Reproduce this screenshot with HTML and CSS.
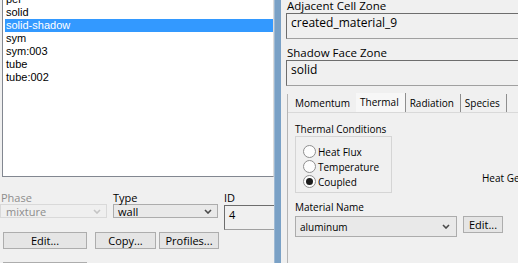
FILE: index.html
```html
<!DOCTYPE html>
<html lang="en">
<head>
    <meta charset="UTF-8">
    <title>boundary conditions</title>
    <link rel="stylesheet" href="styles.css">
</head>
<body>

<section id="window">

<section class="left-pane">
    <div class="zone-list">
        <ul class="zone-items">
            <li>per</li>
            <li>solid</li>
            <li class="selected">solid-shadow</li>
            <li>sym</li>
            <li>sym:003</li>
            <li>tube</li>
            <li>tube:002</li>
        </ul>
    </div>

    <div class="zone-fields">
        <div class="field phase-field">
            <label class="disabled-text">Phase</label>
            <div class="combo combo-small disabled">
                <span>mixture</span>
                <svg class="arrow" width="8" height="5" viewBox="0 0 8 5"><path d="M1 1 L4 4 L7 1" /></svg>
            </div>
        </div>
        <div class="field type-field">
            <label>Type</label>
            <div class="combo combo-small">
                <span>wall</span>
                <svg class="arrow" width="8" height="5" viewBox="0 0 8 5"><path d="M1 1 L4 4 L7 1" /></svg>
            </div>
        </div>
        <div class="field id-field">
            <label>ID</label>
            <div class="text-input id-input">4</div>
        </div>
    </div>

    <div class="zone-buttons">
        <button class="btn btn-edit">Edit...</button>
        <button class="btn btn-copy">Copy...</button>
        <button class="btn btn-profiles">Profiles...</button>
    </div>
    <div class="zone-buttons">
        <button class="btn btn-edit"></button>
    </div>
</section>

<div class="splitter"></div>

<section class="right-pane">
    <label class="top-label">Adjacent Cell Zone</label>
    <div class="text-input wide-input">created_material_9</div>
    <label class="top-label">Shadow Face Zone</label>
    <div class="text-input wide-input">solid</div>

    <div class="tabs">
        <div class="tab-strip">
            <span class="tab">Momentum</span>
            <span class="tab active">Thermal</span>
            <span class="tab">Radiation</span>
            <span class="tab">Species</span>
        </div>
        <div class="tab-body">
            <label class="group-label">Thermal Conditions</label>
            <div class="group-row">
                <div class="group-box">
                    <div class="radio"><span class="dot"></span>Heat Flux</div>
                    <div class="radio"><span class="dot"></span>Temperature</div>
                    <div class="radio checked"><span class="dot"></span>Coupled</div>
                </div>
                <span class="heat-label">Heat Generation Rate</span>
            </div>
            <label class="group-label material-label">Material Name</label>
            <div class="material-row">
                <div class="combo material-combo">
                    <span>aluminum</span>
                    <svg class="arrow" width="8" height="5" viewBox="0 0 8 5"><path d="M1 1 L4 4 L7 1" /></svg>
                </div>
                <button class="btn btn-small">Edit...</button>
            </div>
        </div>
    </div>
</section>

</section>

</body>
</html>
```

FILE: styles.css
```css
:root{
    --panel-bg: #f0f0f0;
    --text-color: #000;
    --gray-text: #8d8d8d;
}

*{
padding: 0;
margin: 0;
box-sizing: border-box;
font-family: 'Open Sans', 'Liberation Sans', sans-serif;
font-size: 11px;
}

body{
    background: var(--panel-bg);
    width: 518px;
    height: 263px;
    overflow: hidden;
}

#window{
    display: flex;
    height: 263px;
}

/* left side */
.left-pane{
    width: 274px;
    flex-shrink: 0;
    overflow: hidden;
}

.zone-list{
    margin-left: 2px;
    height: 177px;
    background: #fff;
    border: 1px solid #828790;
    border-top: none;
    border-right-color: #dcdcdc;
    overflow: hidden;
}

.zone-items{
    list-style: none;
    margin-top: -7px;
    padding-left: 2px;
}

.zone-items li{
    height: 13px;
    line-height: 13px;
    padding-left: 1px;
    font-family: 'Liberation Sans', Arial, sans-serif;
    font-size: 11px;
}

.zone-items li.selected{
    background: #3399ff;
    color: #fff;
}

.zone-fields{
    display: flex;
    margin-top: 14px;
}

.field{
    flex-shrink: 0;
}

.field label{
    display: block;
    height: 13px;
    line-height: 13px;
}

.disabled-text{
    color: var(--gray-text);
}

.phase-field{
    width: 107px;
}

.phase-field label{
    padding-left: 1px;
}

.phase-field .combo{
    padding-left: 5px;
}

.type-field{
    width: 105px;
    margin-left: 6px;
}

.id-field{
    width: 90px;
    margin-left: 6px;
}

.combo{
    display: flex;
    justify-content: space-between;
    align-items: center;
    border: 1px solid #acacac;
    background: #e9e9e9;
    padding: 0 5px 0 4px;
}

.combo-small{
    height: 14px;
}

.combo.disabled{
    border-color: #d9d9d9;
    background: #efefef;
    color: var(--gray-text);
}

.arrow path{
    fill: none;
    stroke: #4a4a4a;
    stroke-width: 1.6;
}

.combo.disabled .arrow path{
    stroke: #c4c4c4;
}

.text-input{
    background: var(--panel-bg);
    border: 1px solid #a0a0a0;
    border-top-color: #6d6d6d;
    border-left-color: #6d6d6d;
    padding: 2px 4px;
    line-height: 13px;
}

.id-input{
    height: 25px;
    margin-top: 1px;
}

.zone-buttons{
    display: flex;
    margin-top: 2px;
    padding-left: 3px;
}

.btn{
    all: unset;
    box-sizing: border-box;
    height: 17px;
    border: 1px solid #adadad;
    background: #e5e5e5;
    text-align: center;
    line-height: 14px;
    font-family: 'Open Sans', sans-serif;
    font-size: 11px;
    cursor: pointer;
}

.btn-edit{
    width: 84px;
}

.btn-copy{
    width: 61px;
    margin-left: 8px;
}

.btn-profiles{
    width: 60px;
    margin-left: 3px;
}

.zone-buttons + .zone-buttons{
    margin-top: 13px;
}

.splitter{
    width: 7px;
    flex-shrink: 0;
    background: #7aa1c6;
    border-left: 1px solid #9fbad4;
}

/* right side */
.right-pane{
    flex: 1;
    overflow: hidden;
    padding-left: 5px;
    min-width: 0;
}

.top-label{
    display: block;
    height: 13px;
    line-height: 11px;
    padding-left: 1px;
    font-size: 11.5px;
    white-space: nowrap;
}

.wide-input{
    width: 260px;
    height: 26px;
    margin-bottom: 8px;
    font-size: 12px;
    white-space: nowrap;
}

.tabs{
    margin-left: 1px;
    border-left: 1px solid #b5b5b5;
    width: 260px;
    height: 177px;
}

.tab-strip{
    display: flex;
    height: 19px;
    margin-top: 7px;
    padding-left: 5px;
    border-bottom: 1px solid #d9d9d9;
    white-space: nowrap;
}

.tab-strip .tab,
.tab-body label,
.tab-body .radio,
.tab-body .heat-label,
.material-combo span{
    font-size: 10px;
}

.tab{
    padding: 0 6px 0 4px;
    line-height: 19px;
    border-right: 1px solid #8e8e8e;
}

.tab:first-child{
    border-right: none;
    padding: 0 6px 0 2px;
}

.tab.active{
    margin-top: -1px;
    line-height: 18px;
    background: #f7f7f7;
}

.tab-body{
    padding-left: 7px;
}

.group-label{
    display: block;
    height: 13px;
    line-height: 13px;
    margin-top: 10px;
}

.group-row{
    display: flex;
    align-items: flex-end;
}

.group-box{
    width: 97px;
    flex-shrink: 0;
    height: 57px;
    border: 1px solid #d5d5d5;
    padding: 7px 0 0 7px;
}

.radio{
    display: flex;
    align-items: center;
    height: 15px;
}

.dot{
    width: 13px;
    height: 13px;
    border: 1px solid #8f8f8f;
    border-radius: 50%;
    background: #fdfdfd;
    margin-right: 2px;
    display: flex;
    align-items: center;
    justify-content: center;
}

.radio.checked .dot::after{
    content: '';
    width: 7px;
    height: 7px;
    border-radius: 50%;
    background: #1c1c1c;
}

.heat-label{
    margin-left: 90px;
    margin-bottom: 8px;
    white-space: nowrap;
}

.material-label{
    margin-top: 8px;
}

.material-row{
    display: flex;
    align-items: flex-start;
    margin-top: 2px;
}

.material-combo{
    width: 162px;
    height: 21px;
    padding-right: 6px;
}

.btn-small{
    width: 40px;
    height: 17px;
    margin-left: 6px;
}
```
